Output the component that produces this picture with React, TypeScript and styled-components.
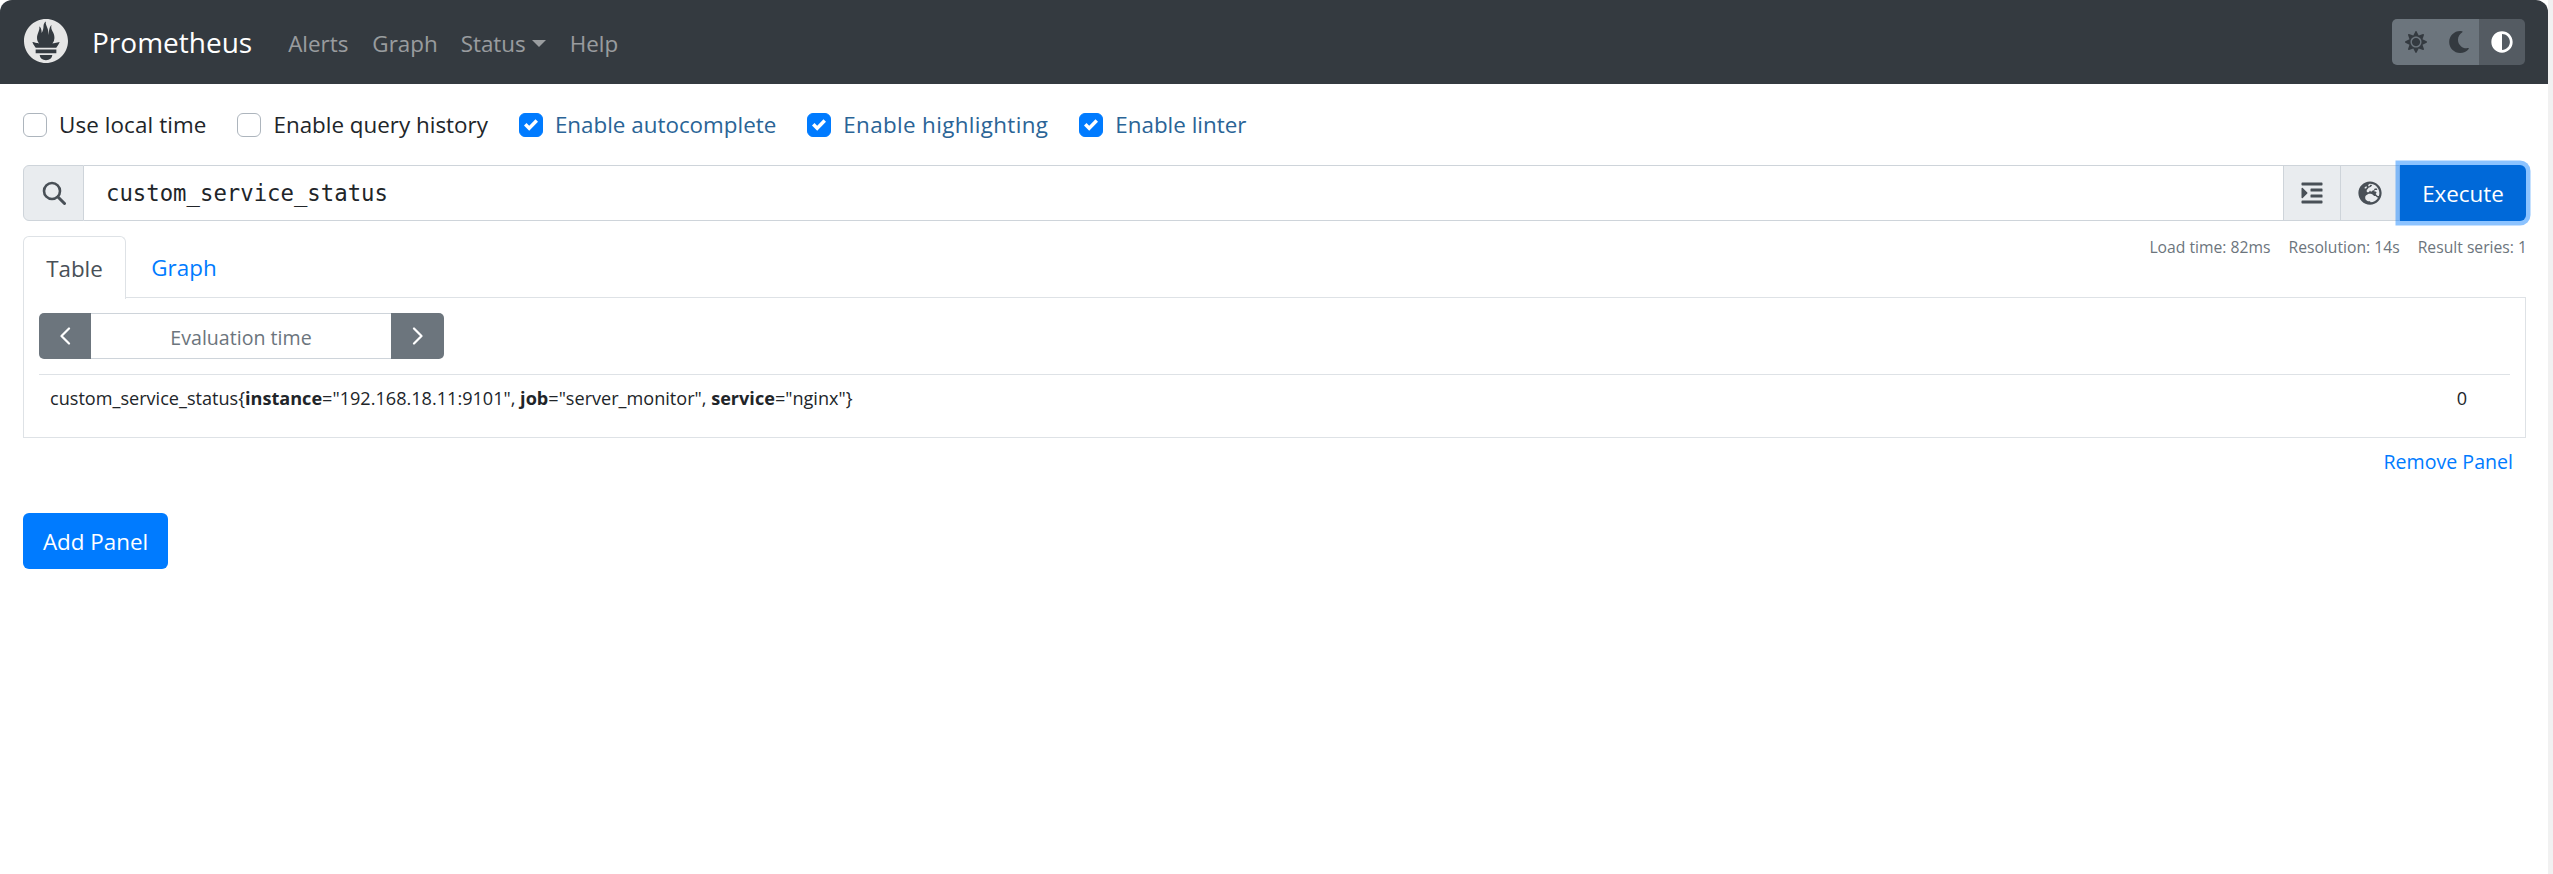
import React from "react";
import styled, { createGlobalStyle } from "styled-components";
import { FaIndent, FaGlobeEurope, FaSun, FaMoon, FaAdjust } from "react-icons/fa";

const Global = createGlobalStyle`
  html, body { margin: 0; padding: 0; background: #fff; }
  * { box-sizing: border-box; }
  body { font-family: "Open Sans", "Liberation Sans", sans-serif; font-size: 22.4px; color: #212529; }
`;
const Page = styled.div`display: flex; width: 100%; min-height: 874px; background: #fff;`;
const Main = styled.div`flex: 1; min-width: 0;`;
const Strip = styled.div`width: 5px; background: #f1f1f1;`;
const Navbar = styled.nav`
  height: 84px; background: #343a40; display: flex; align-items: center; padding: 0 8px 0 24px;
  border-radius: 12px 12px 0 0;
`;
const Logo = styled.svg`width: 44px; height: 44px; fill: #e6e6e6; margin: 0 24px 2px 0;`;
const Brand = styled.span`font-size: 28px; color: #fff; margin-right: 36px;`;
const NavLink = styled.span<{ $mr?: number }>`
  color: rgba(255,255,255,.5); font-size: 22.4px; margin-right: ${p => p.$mr ?? 24}px; padding-top: 3px; display: inline-flex; align-items: center;
`;
const Caret = styled.i`display: inline-block; margin-left: 6px; border-top: 7px solid currentColor; border-left: 7px solid transparent; border-right: 7px solid transparent;`;
const Spacer = styled.div`flex: 1;`;
const ThemeGroup = styled.div`display: flex; height: 46px; width: 133px; border-radius: 5px; overflow: hidden; margin-right: 15px;`;
const ThemeBtn = styled.div<{ $active?: boolean; $w: number }>`
  width: ${p => p.$w}px; display: flex; align-items: center; justify-content: center;
  background: ${p => (p.$active ? "#545b62" : "#6c757d")}; color: ${p => (p.$active ? "#fff" : "#343a40")}; font-size: 22px;
`;
const Content = styled.div`padding: 0 22px 0 23px;`;
const Options = styled.div`display: flex; align-items: center; height: 81px; gap: 31px;`;
const Option = styled.label<{ $on?: boolean; $ls?: number }>`
  display: flex; align-items: center; gap: 12px; color: ${p => (p.$on ? "#2a6496" : "#212529")}; font-size: 22.4px;
  letter-spacing: ${p => p.$ls ?? 0}px;
`;
const Box = styled.span<{ $on?: boolean }>`
  width: 24px; height: 24px; border-radius: 6px; display: flex; align-items: center; justify-content: center;
  border: 1.5px solid ${p => (p.$on ? "#007bff" : "#adb5bd")}; background: ${p => (p.$on ? "#007bff" : "#fff")};
`;
const Query = styled.div`display: flex; height: 56px; position: relative;`;
const Addon = styled.div<{ $first?: boolean; $w: number }>`
  width: ${p => p.$w}px; flex: none; display: flex; align-items: center; justify-content: center; background: #e9ecef; color: #495057;
  border: 1.5px solid #ced4da; font-size: 24px; margin-left: ${p => (p.$first ? 0 : -1)}px;
  border-radius: ${p => (p.$first ? "6px 0 0 6px" : "0")};
`;
const QueryInput = styled.div`
  flex: 1; border-top: 1.5px solid #ced4da; border-bottom: 1.5px solid #ced4da; display: flex; align-items: center; padding-left: 22px;
  font-family: "DejaVu Sans Mono", monospace; font-size: 22.3px; color: #212529;
`;
const Execute = styled.button`
  width: 126px; flex: none; border: 0; background: #0069d9; color: #fff; border-radius: 0 6px 6px 0; font: inherit; font-size: 22.4px; padding: 0;
  box-shadow: 0 0 0 4.5px rgba(0,123,255,.45); position: relative;
`;
const TabHeader = styled.div`display: flex; height: 76px; align-items: flex-end; justify-content: space-between; position: relative;`;
const Tabs = styled.div`display: flex; height: 61px;`;
const Tab = styled.div<{ $active?: boolean; $w: number }>`
  width: ${p => p.$w}px; display: flex; align-items: center; justify-content: center; font-size: 22.4px; padding-top: 2px;
  color: ${p => (p.$active ? "#495057" : "#007bff")};
  ${p => p.$active ? "border: 1.5px solid #dee2e6; border-bottom: 0; border-radius: 6px 6px 0 0; background: #fff; margin-bottom: -1.5px; position: relative;" : ""}
`;
const Stats = styled.div`display: flex; gap: 18px; position: absolute; right: -1px; top: 15px; color: #6c757d; font-size: 15.7px;`;
const Panel = styled.div`border: 1.5px solid #dee2e6; height: 141px; padding: 15px;`;
const TimeRow = styled.div`display: flex; width: 405px; height: 46px;`;
const TimeBtn = styled.div<{ $left?: boolean; $w: number }>`
  width: ${p => p.$w}px; background: #6c757d; display: flex; align-items: center; justify-content: center;
  border-radius: ${p => (p.$left ? "5px 0 0 5px" : "0 5px 5px 0")};
`;
const TimeInput = styled.div`flex: 1; border-top: 1.5px solid #ced4da; border-bottom: 1.5px solid #ced4da; color: #6c757d; font-size: 19.6px; padding-top: 2px; display: flex; align-items: center; justify-content: center;`;
const Row = styled.div`margin-top: 15px; border-top: 1.5px solid #dee2e6; display: flex; justify-content: space-between; padding: 11px 43px 0 11px; font-size: 18.1px;`;
const Metric = styled.div`color: #212529;`;
const Value = styled.div`color: #212529;`;
const RemoveRow = styled.div`display: flex; justify-content: flex-end; padding: 10px 13px 0 0; height: 75px; color: #007bff; font-size: 19.6px;`;
const AddButton = styled.button`display: block; width: 145px; height: 56px; border: 0; border-radius: 6px; background: #007bff; color: #fff; font: inherit; font-size: 22.4px; padding: 0;`;

const Check = () => (
  <svg width="14" height="14" viewBox="0 0 8 8"><path fill="#fff" d="M6.564.75l-3.59 3.612-1.538-1.55L0 4.26l2.974 2.99L8 2.193z" /></svg>
);
const Chevron = ({ d }: { d: string }) => (
  <svg width="12" height="18" viewBox="0 0 12 18" fill="none" stroke="#fff" strokeWidth="2.2" strokeLinecap="round" strokeLinejoin="round"><path d={d} /></svg>
);
const SearchIcon = () => (
  <svg width="24" height="24" viewBox="0 0 24 24" fill="none" stroke="#495057" strokeWidth="2.6" strokeLinecap="round">
    <circle cx="10" cy="10" r="8" /><path d="M16 16l6.5 6.5" strokeWidth="3" />
  </svg>
);

export default function App() {
  return (
    <Page>
      <Global />
      <Main>
        <Navbar>
          <Logo viewBox="0 0 24 24"><path d="M12 0C5.373 0 0 5.372 0 12c0 6.627 5.373 12 12 12s12-5.373 12-12c0-6.628-5.373-12-12-12zm0 22.46c-1.885 0-3.414-1.26-3.414-2.814h6.828c0 1.553-1.528 2.813-3.414 2.813zm5.64-3.745H6.36v-2.046h11.28v2.046zm-.04-3.098H6.391c-.037-.043-.075-.086-.111-.13-1.155-1.401-1.427-2.133-1.69-2.879-.005-.025 1.4.287 2.395.511 0 0 .513.119 1.262.255-.72-.843-1.147-1.915-1.147-3.01 0-2.406 1.845-4.508 1.18-6.207.648.053 1.34 1.367 1.387 3.422.689-.951.977-2.69.977-3.755 0-1.103.727-2.385 1.454-2.429-.648 1.069.168 1.984.894 4.256.272.854.237 2.29.447 3.201.07-1.892.395-4.652 1.595-5.605-.529 1.2.079 2.702.494 3.424.671 1.164 1.078 2.047 1.078 3.716a4.642 4.642 0 0 1-1.11 2.996c.792-.149 1.34-.283 1.34-.283l2.573-.502s-.374 1.538-1.81 3.019z" /></Logo>
          <Brand>Prometheus</Brand>
          <NavLink>Alerts</NavLink>
          <NavLink $mr={23}>Graph</NavLink>
          <NavLink>Status<Caret /></NavLink>
          <NavLink>Help</NavLink>
          <Spacer />
          <ThemeGroup>
            <ThemeBtn $w={47}><FaSun /></ThemeBtn>
            <ThemeBtn $w={40}><FaMoon /></ThemeBtn>
            <ThemeBtn $w={46} $active><FaAdjust /></ThemeBtn>
          </ThemeGroup>
        </Navbar>
        <Content>
          <Options>
            <Option $ls={0.1}><Box />Use local time</Option>
            <Option><Box />Enable query history</Option>
            <Option $on><Box $on><Check /></Box>Enable autocomplete</Option>
            <Option $on $ls={0.35}><Box $on><Check /></Box>Enable highlighting</Option>
            <Option $on><Box $on><Check /></Box>Enable linter</Option>
          </Options>
          <Query>
            <Addon $first $w={61}><SearchIcon /></Addon>
            <QueryInput>custom_service_status</QueryInput>
            <Addon $w={58}><FaIndent /></Addon>
            <Addon $w={60}><FaGlobeEurope /></Addon>
            <Execute>Execute</Execute>
          </Query>
          <TabHeader>
            <Tabs>
              <Tab $active $w={103}>Table</Tab>
              <Tab $w={116}>Graph</Tab>
            </Tabs>
            <Stats><span>Load time: 82ms</span><span>Resolution: 14s</span><span>Result series: 1</span></Stats>
          </TabHeader>
          <Panel>
            <TimeRow>
              <TimeBtn $left $w={52}><Chevron d="M10 1.5L2.5 9l7.5 7.5" /></TimeBtn>
              <TimeInput>Evaluation time</TimeInput>
              <TimeBtn $w={53}><Chevron d="M2 1.5L9.5 9 2 16.5" /></TimeBtn>
            </TimeRow>
            <Row>
              <Metric>custom_service_status{"{"}<b>instance</b>="192.168.18.11:9101", <b>job</b>="server_monitor", <b>service</b>="nginx"{"}"}</Metric>
              <Value>0</Value>
            </Row>
          </Panel>
          <RemoveRow>Remove Panel</RemoveRow>
          <AddButton>Add Panel</AddButton>
        </Content>
      </Main>
      <Strip />
    </Page>
  );
}
